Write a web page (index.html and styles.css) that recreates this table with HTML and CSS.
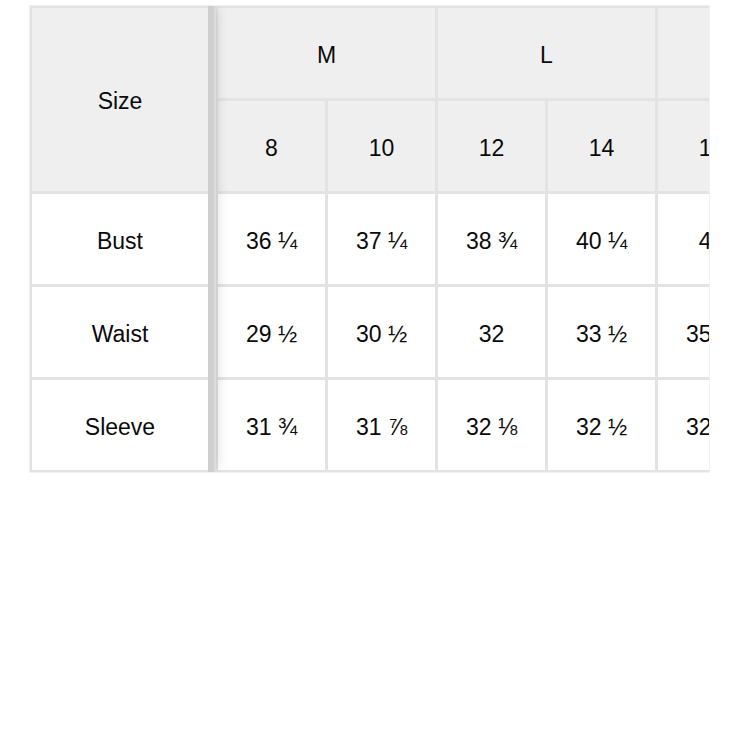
FILE: index.html
```html
<!DOCTYPE html>
<html>
<head>
<meta charset="utf-8">
<link rel="stylesheet" href="styles.css">
</head>
<body>
<div class="chart">
  <div class="sticky">
    <div class="cell head tall">Size</div>
    <div class="cell">Bust</div>
    <div class="cell">Waist</div>
    <div class="cell">Sleeve</div>
  </div>
  <div class="scroll">
    <div class="grid">
      <div class="cell head span2">M</div>
      <div class="cell head span2">L</div>
      <div class="cell head"></div>
      <div class="cell head">8</div>
      <div class="cell head">10</div>
      <div class="cell head">12</div>
      <div class="cell head">14</div>
      <div class="cell head">16</div>
      <div class="cell">36 ¼</div>
      <div class="cell">37 ¼</div>
      <div class="cell">38 ¾</div>
      <div class="cell">40 ¼</div>
      <div class="cell">42</div>
      <div class="cell">29 ½</div>
      <div class="cell">30 ½</div>
      <div class="cell">32</div>
      <div class="cell">33 ½</div>
      <div class="cell">35 ½</div>
      <div class="cell">31 ¾</div>
      <div class="cell">31 ⅞</div>
      <div class="cell">32 ⅛</div>
      <div class="cell">32 ½</div>
      <div class="cell">32 ¾</div>
    </div>
  </div>
</div>
</body>
</html>
```
FILE: styles.css
```css
html, body {
  margin: 0;
  padding: 0;
  background: #fff;
}
body {
  font-family: "Liberation Sans", Arial, sans-serif;
  font-size: 23px;
  color: #0a0a0a;
}
.chart {
  margin: 5px 0 0 29px;
  width: 679px;
  border: 1px solid #f1f1f1;
  background: #e3e3e3;
  display: flex;
  overflow: hidden;
}
.sticky {
  position: relative;
  z-index: 1;
  flex: none;
  display: grid;
  grid-template-columns: 176px;
  grid-template-rows: 183px 90px 90px 90px;
  gap: 3px;
  padding: 2px 0 2px 2px;
  border-right: 8px solid #cfcfcf;
  background: #e3e3e3;
  box-shadow: 5px 0 10px -3px rgba(0, 0, 0, 0.13);
}
.sticky::after {
  content: "";
  position: absolute;
  top: 0;
  bottom: 0;
  right: -8px;
  width: 2px;
  background: #dcdcdc;
}
.scroll {
  flex: 1;
  min-width: 0;
  overflow: hidden;
}
.grid {
  display: grid;
  grid-template-columns: repeat(5, 107px);
  grid-auto-rows: 90px;
  gap: 3px;
  padding: 2px;
  width: max-content;
  background: #e3e3e3;
}
.cell {
  background: #fff;
  display: flex;
  align-items: center;
  justify-content: center;
  white-space: nowrap;
  padding-top: 4px;
  box-sizing: border-box;
}
.head {
  background: #efefef;
}
.span2 {
  grid-column: span 2;
}
```
